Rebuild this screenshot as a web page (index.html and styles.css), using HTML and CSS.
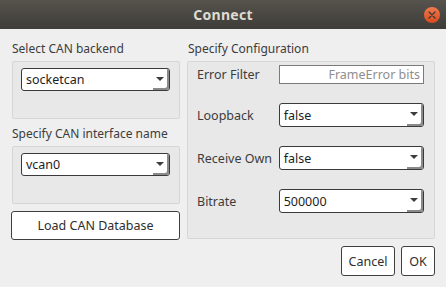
FILE: index.html
```
<!DOCTYPE html>
<html lang="en">
<head>
    <meta charset="UTF-8">
    <meta name="viewport" content="width=device-width, initial-scale=1.0">
    <title>Connect</title>
    <link rel="stylesheet" href="styles.css">
</head>
<body>
    <div class="window">
        <div class="titlebar">
            <span class="title">Connect</span>
            <span class="close">
                <svg width="8" height="8" viewBox="0 0 8 8"><path d="M1 1L7 7M7 1L1 7" stroke="#3c3b37" stroke-width="1.3" stroke-linecap="round"/></svg>
            </span>
        </div>

        <div class="content">
            <div class="column left">
                <div class="label">Select CAN backend</div>
                <div class="group group-left">
                    <div class="combo"><span>socketcan</span><span class="arrow"></span></div>
                </div>

                <div class="label label-second">Specify CAN interface name</div>
                <div class="group group-left">
                    <div class="combo"><span>vcan0</span><span class="arrow"></span></div>
                </div>

                <button class="btn btn-load">Load CAN Database</button>
            </div>

            <div class="column right">
                <div class="label">Specify Configuration</div>
                <div class="group group-config">
                    <div class="row row-filter">
                        <span class="row-label">Error Filter</span>
                        <div class="text-input">FrameError bits</div>
                    </div>
                    <div class="row">
                        <span class="row-label">Loopback</span>
                        <div class="combo"><span>false</span><span class="arrow"></span></div>
                    </div>
                    <div class="row">
                        <span class="row-label">Receive Own</span>
                        <div class="combo"><span>false</span><span class="arrow"></span></div>
                    </div>
                    <div class="row">
                        <span class="row-label">Bitrate</span>
                        <div class="combo"><span>500000</span><span class="arrow"></span></div>
                    </div>
                </div>

                <div class="actions">
                    <button class="btn btn-cancel">Cancel</button>
                    <button class="btn btn-ok">OK</button>
                </div>
            </div>
        </div>
    </div>
</body>
</html>
```

FILE: styles.css
```
body {
    margin: 0;
    padding: 0;
    font-family: "Noto Sans", sans-serif;
    font-size: 12px;
    color: #3c3c3c;
    background-color: #efefef;
}

.window {
    width: 446px;
    height: 287px;
    overflow: hidden;
}

.titlebar {
    height: 29px;
    display: flex;
    align-items: center;
    justify-content: center;
    position: relative;
    background: linear-gradient(#56534d, #3d3c38);
}

.title {
    color: #dfdbd2;
    font-weight: bold;
    font-size: 14px;
    letter-spacing: 0.3px;
}

.close {
    position: absolute;
    right: 6px;
    top: 7px;
    width: 16px;
    height: 16px;
    border-radius: 50%;
    background: linear-gradient(#f27a4d, #d74a1f);
    display: flex;
    align-items: center;
    justify-content: center;
}

.close svg {
    display: block;
}

.content {
    display: flex;
    gap: 7px;
    padding: 0 11px;
}

.column {
    display: flex;
    flex-direction: column;
}

.left {
    width: 169px;
}

.right {
    width: 248px;
}

.label {
    height: 17px;
    line-height: 17px;
    margin-top: 11px;
    margin-bottom: 4px;
    padding-left: 1px;
    white-space: nowrap;
}

.label-second {
    margin-top: 6px;
}

.group {
    background-color: #e8e8e8;
    border: 1px solid #d6d6d6;
    border-radius: 2px;
    box-sizing: border-box;
}

.group-left {
    height: 58px;
    margin-left: 1px;
    padding: 6px 9px 0 8px;
}

.combo {
    height: 23px;
    box-sizing: border-box;
    background-color: #fff;
    border: 1px solid #3a3a3a;
    border-radius: 3px;
    display: flex;
    align-items: center;
    justify-content: space-between;
    padding-left: 4px;
    color: #1e1e1e;
    font-size: 12.5px;
}

.arrow {
    align-self: stretch;
    width: 16px;
    position: relative;
    box-shadow: inset -2px -2px 0 #8a8a8a;
    border-radius: 0 2px 2px 0;
}

.arrow::after {
    content: "";
    position: absolute;
    left: 3px;
    top: 8px;
    border-left: 4px solid transparent;
    border-right: 4px solid transparent;
    border-top: 4px solid #3c3c3c;
}

.btn {
    font-family: "Noto Sans", sans-serif;
    font-size: 12.5px;
    color: #2e2e2e;
    background-color: #fff;
    border: 1px solid #3f3f3f;
    border-radius: 3px;
    padding: 0;
}

.btn-load {
    margin-top: 7px;
    height: 29px;
    width: 169px;
}

.group-config {
    height: 178px;
    padding: 3px 10px 0 9px;
}

.row {
    display: flex;
    align-items: center;
    margin-top: 19px;
}

.row .combo {
    width: 146px;
    height: 24px;
}

.row-filter {
    margin-top: 0;
}

.row-label {
    width: 82px;
    font-size: 12.5px;
    white-space: nowrap;
}

.text-input {
    width: 146px;
    height: 19px;
    box-sizing: border-box;
    background-color: #fff;
    border: 1px solid #7a7a7a;
    color: #8e8e8e;
    text-align: right;
    padding-right: 3px;
    line-height: 17px;
    font-size: 12.5px;
}

.actions {
    display: flex;
    justify-content: flex-end;
    gap: 6px;
    margin-top: 7px;
}

.btn-cancel {
    width: 54px;
    height: 30px;
}

.btn-ok {
    width: 34px;
    height: 30px;
}
```
